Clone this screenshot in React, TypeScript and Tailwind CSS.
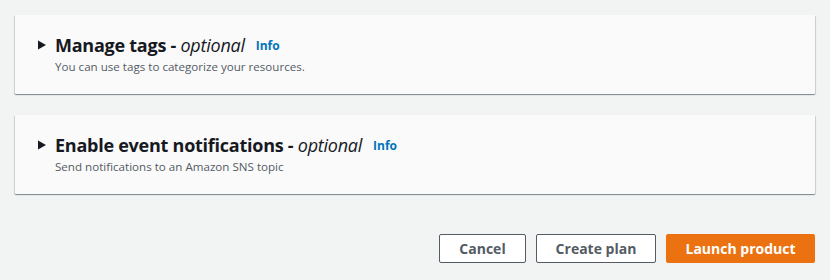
export default function App() {
  const sections = [
    { title: "Manage tags", desc: "You can use tags to categorize your resources." },
    { title: "Enable event notifications", desc: "Send notifications to an Amazon SNS topic" },
  ];

  return (
    <div
      className="w-[830px] h-[280px] bg-[#f2f3f3] px-[15px] pt-[15px]"
      style={{ fontFamily: '"Open Sans", "Noto Sans", Arial, sans-serif' }}
    >
      <div className="flex flex-col gap-[21px]">
        {sections.map((s) => (
          <div
            key={s.title}
            className="h-[79px] bg-[#fafafa] rounded-[1px] shadow-[0_1px_1px_0_rgba(0,28,36,0.3),1px_1px_1px_0_rgba(0,28,36,0.15),-1px_1px_1px_0_rgba(0,28,36,0.15)] pl-[22px] pt-[19px]"
          >
            <div className="flex items-center">
              <svg width="10" height="10" viewBox="0 0 10 10" className="mr-[8px]">
                <polygon points="1,0.5 9,5 1,9.5" fill="#16191f" />
              </svg>
              <span className="text-[18px] leading-[22px] font-bold text-[#16191f] tracking-[-0.25px]">
                {s.title} - <span className="italic font-normal">optional</span>
              </span>
              <span className="ml-[11px] text-[12px] font-bold text-[#0073bb] mt-[2px]">Info</span>
            </div>
            <p className="ml-[18px] mt-[3px] text-[11.6px] leading-[16px] text-[#545b64]">{s.desc}</p>
          </div>
        ))}
      </div>
      <div className="flex justify-end gap-[10px] mt-[40px]">
        <button className="w-[87px] h-[29px] border border-[#545b64] rounded-[2px] bg-white text-[14px] font-bold text-[#545b64]">
          Cancel
        </button>
        <button className="w-[120px] h-[29px] border border-[#545b64] rounded-[2px] bg-white text-[14px] font-bold text-[#545b64]">
          Create plan
        </button>
        <button className="w-[149px] h-[29px] border border-[#ec7211] rounded-[2px] bg-[#ec7211] text-[14px] font-bold text-white">
          Launch product
        </button>
      </div>
    </div>
  );
}
